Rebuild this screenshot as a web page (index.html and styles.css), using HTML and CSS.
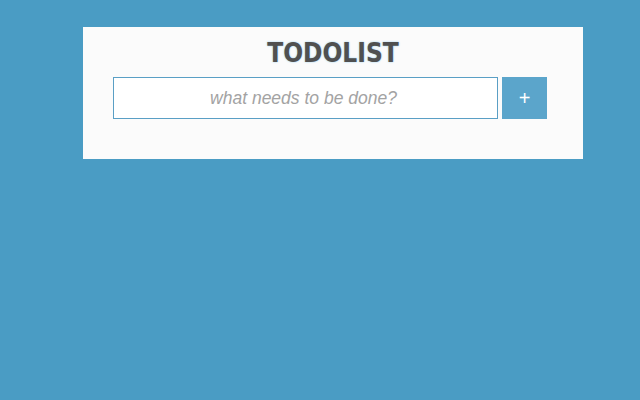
FILE: index.html
```html
<!DOCTYPE html>
<html>
<head>
<meta charset="utf-8">
<link rel="stylesheet" href="styles.css">
</head>
<body>
<div class="card">
  <h1 class="title">TODOLIST</h1>
  <form class="add-form">
    <input class="new-todo" type="text" placeholder="what needs to be done?">
    <button class="add-btn" type="button">+</button>
  </form>
</div>
</body>
</html>
```
FILE: styles.css
```css
html, body {
  margin: 0;
  padding: 0;
  height: 100%;
}
body {
  background: #4a9cc4;
  font-family: "Liberation Sans", Arial, sans-serif;
}
.card {
  box-sizing: border-box;
  width: 500px;
  margin: 27px 0 0 83px;
  padding: 11px 0 40px 30px;
  background: #fbfbfb;
}
.title {
  margin: 0;
  font-family: "DejaVu Sans Condensed", "DejaVu Sans", Verdana, sans-serif;
  font-weight: bold;
  font-size: 26px;
  line-height: 30px;
  text-align: center;
  color: #505050;
  text-shadow: 0 0 2px #8ccbef;
  padding-right: 30px;
}
.add-form {
  display: flex;
  gap: 4px;
  margin-top: 9px;
}
.new-todo {
  box-sizing: border-box;
  width: 385px;
  height: 42px;
  margin: 0;
  border: 1px solid #5a9fc5;
  background: #fff;
  font-family: "Liberation Sans", Arial, sans-serif;
  font-style: italic;
  font-size: 17.5px;
  text-align: center;
  outline: none;
  padding: 0 12px 0 8px;
}
.new-todo::placeholder {
  color: #a3a3a3;
}
.add-btn {
  box-sizing: border-box;
  width: 45px;
  height: 42px;
  margin: 0;
  padding: 0;
  border: none;
  background: #5ba5cb;
  color: #fff;
  font-family: "Liberation Sans", Arial, sans-serif;
  font-size: 20px;
  font-weight: normal;
}
```
